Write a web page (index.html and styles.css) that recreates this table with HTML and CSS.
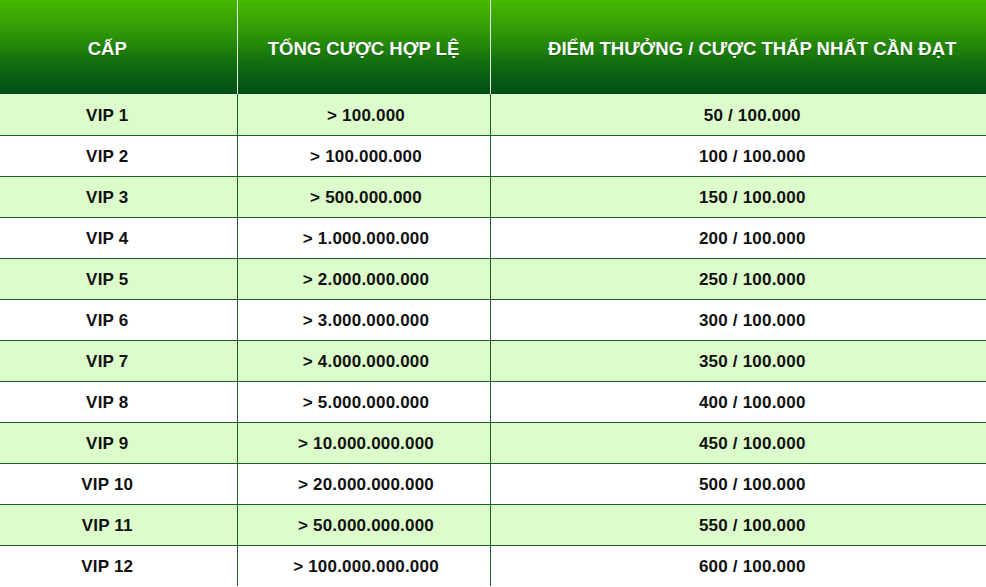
FILE: index.html
```html
<!DOCTYPE html>
<html lang="vi">
<head>
<meta charset="utf-8">
<title>VIP</title>
<link rel="stylesheet" href="styles.css">
</head>
<body>
<div class="wrap">
<table class="vip">
<colgroup><col class="c1"><col class="c2"><col class="c3"></colgroup>
<thead>
<tr><th>CẤP</th><th>TỔNG CƯỢC HỢP LỆ</th><th>ĐIỂM THƯỞNG / CƯỢC THẤP NHẤT CẦN ĐẠT</th></tr>
</thead>
<tbody>
<tr><td>VIP 1</td><td>&gt; 100.000</td><td>50 / 100.000</td></tr>
<tr><td>VIP 2</td><td>&gt; 100.000.000</td><td>100 / 100.000</td></tr>
<tr><td>VIP 3</td><td>&gt; 500.000.000</td><td>150 / 100.000</td></tr>
<tr><td>VIP 4</td><td>&gt; 1.000.000.000</td><td>200 / 100.000</td></tr>
<tr><td>VIP 5</td><td>&gt; 2.000.000.000</td><td>250 / 100.000</td></tr>
<tr><td>VIP 6</td><td>&gt; 3.000.000.000</td><td>300 / 100.000</td></tr>
<tr><td>VIP 7</td><td>&gt; 4.000.000.000</td><td>350 / 100.000</td></tr>
<tr><td>VIP 8</td><td>&gt; 5.000.000.000</td><td>400 / 100.000</td></tr>
<tr><td>VIP 9</td><td>&gt; 10.000.000.000</td><td>450 / 100.000</td></tr>
<tr><td>VIP 10</td><td>&gt; 20.000.000.000</td><td>500 / 100.000</td></tr>
<tr><td>VIP 11</td><td>&gt; 50.000.000.000</td><td>550 / 100.000</td></tr>
<tr><td>VIP 12</td><td>&gt; 100.000.000.000</td><td>600 / 100.000</td></tr>
</tbody>
</table>
</div>
</body>
</html>
```
FILE: styles.css
```css
html, body {
  margin: 0;
  padding: 0;
  background: #ffffff;
}
.wrap {
  width: 986px;
  height: 587px;
  overflow: hidden;
}
.vip {
  margin-left: -22px;
  width: 1036px;
  border-collapse: collapse;
  table-layout: fixed;
  font-family: "Liberation Sans", Arial, sans-serif;
  font-weight: bold;
}
.c1 { width: 259px; }
.c2 { width: 253px; }
.c3 { width: 524px; }
.vip th {
  height: 94px;
  padding: 3px 0 0 0;
  box-sizing: border-box;
  color: #ffffff;
  font-size: 18.5px;
  text-align: center;
  vertical-align: middle;
  background: linear-gradient(to bottom, #47b900 0%, #2f9606 35%, #0f6a10 70%, #004d1a 100%);
  border-left: 1px solid #e8f2e0;
  text-shadow: 0 1px 1px rgba(0, 0, 0, 0.25);
}
.vip th:first-child { border-left: none; }
.vip td {
  height: 41px;
  padding: 3px 0 0 0;
  box-sizing: border-box;
  color: #111111;
  font-size: 17px;
  letter-spacing: 0.2px;
  text-align: center;
  vertical-align: middle;
  border-top: 1px solid #1e5e2c;
  border-left: 1px solid #1e5e2c;
}
.vip tbody tr:first-child td { border-top: none; }
.vip td:first-child { border-left: none; }
.vip td:nth-child(2) { padding-left: 5px; }
.vip tbody tr:nth-child(odd) td { background: #dcfccb; }
.vip tbody tr:nth-child(even) td { background: #ffffff; }
```
